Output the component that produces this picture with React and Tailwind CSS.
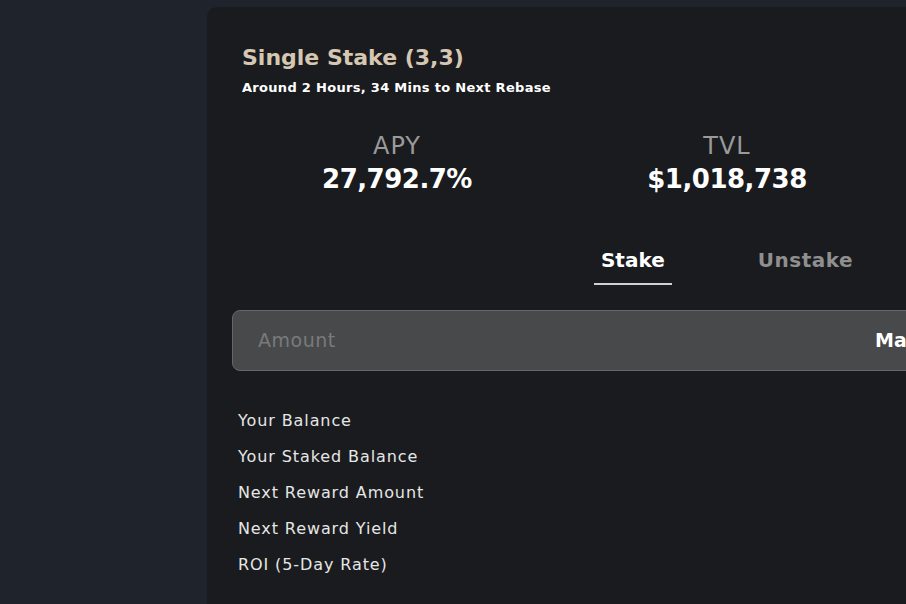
import React from 'react';

const stats = [
  { label: 'APY', value: '27,792.7%' },
  { label: 'TVL', value: '$1,018,738' },
];

const rows = ['Your Balance', 'Your Staked Balance', 'Next Reward Amount', 'Next Reward Yield', 'ROI (5-Day Rate)'];

const App = () => {
  return (
    <div
      className="w-screen h-screen overflow-hidden bg-[#1f232b] pt-[7px] pl-[207px]"
      style={{ fontFamily: '"DejaVu Sans", sans-serif' }}
    >
      <div className="w-[1040px] min-h-[700px] bg-[#1a1b1e] rounded-[10px] px-[25px] pt-[36px]">
        <div className="pl-[10px]">
          <h1 className="text-[22px] font-semibold text-[#d6c7b3] leading-[30px]">Single Stake (3,3)</h1>
          <p className="text-[13px] font-semibold text-white leading-[18px] mt-[6px] tracking-[0.3px]">
            Around 2 Hours, 34 Mins to Next Rebase
          </p>
        </div>

        <div className="grid grid-cols-3 mt-[34px]">
          {stats.map((s) => (
            <div key={s.label} className="flex flex-col items-center">
              <span className="text-[24px] text-[#9a9a9a] leading-[30px] tracking-[1px]">{s.label}</span>
              <span className="text-[26px] font-bold text-white leading-[36px] tracking-[-0.5px]">{s.value}</span>
            </div>
          ))}
        </div>

        <div className="flex justify-center gap-[79px] mt-[46px]">
          <button className="flex flex-col items-center">
            <span className="text-[20px] font-semibold text-white leading-[34px] px-[7px]">Stake</span>
            <span className="h-[2px] w-full bg-[#d0d0d0] mt-[6px]" />
          </button>
          <button className="flex flex-col items-center">
            <span className="text-[20px] font-semibold text-[#8f8f8f] leading-[34px] px-[7px] tracking-[0.5px]">Unstake</span>
            <span className="h-[2px] w-full mt-[6px]" />
          </button>
        </div>

        <div className="mt-[25px] flex gap-[20px]">
          <div className="w-[707px] h-[61px] rounded-[8px] border border-[#66676a] bg-[#48494b] flex items-center pl-[25px]">
            <span className="flex-1 text-[19px] text-[#7a7a7c] tracking-[0.5px]">Amount</span>
            <span className="w-[63px] text-[19px] font-semibold text-white">Max</span>
          </div>
        </div>

        <div className="mt-[39px] pl-[6px] flex flex-col gap-[14px]">
          {rows.map((r) => (
            <div key={r} className="flex">
              <span className="text-[16px] text-[#e6e6e6] leading-[22px] tracking-[0.9px]">{r}</span>
            </div>
          ))}
        </div>
      </div>
    </div>
  );
};

export default App;
